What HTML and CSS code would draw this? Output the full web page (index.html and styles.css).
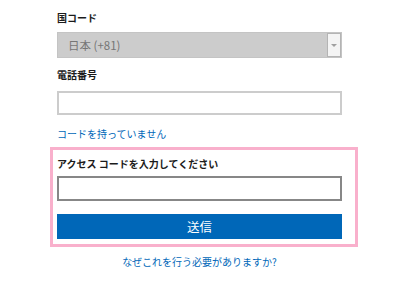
FILE: index.html
```html
<!DOCTYPE html>
<html lang="ja">
<head>
<meta charset="utf-8">
<link rel="stylesheet" href="styles.css">
</head>
<body>
<div class="form">
  <div class="label first">国コード</div>
  <div class="select">
    <span class="select-text">日本 (+81)</span>
    <span class="arrow-box"><span class="arrow"></span></span>
  </div>
  <div class="label second">電話番号</div>
  <div class="input light"></div>
  <a class="link nocode" href="#">コードを持っていません</a>
  <div class="highlight">
    <div class="label third">アクセス コードを入力してください</div>
    <div class="input dark"></div>
    <div class="button">送信</div>
  </div>
  <div class="why"><a class="link" href="#">なぜこれを行う必要がありますか?</a></div>
</div>
</body>
</html>
```
FILE: styles.css
```css
html, body {
  margin: 0;
  padding: 0;
  background: #ffffff;
}
body {
  font-family: "Noto Sans CJK JP", "Noto Sans", sans-serif;
  font-size: 10px;
  color: #1b1b1b;
}
.form {
  width: 285px;
  margin-left: 57px;
  padding-top: 10px;
}
.label {
  font-weight: bold;
  line-height: 16px;
  height: 16px;
}
.select {
  margin-top: 6px;
  height: 26px;
  box-sizing: border-box;
  background: #cccccc;
  border: 1px solid #c4c4c4;
  display: flex;
  align-items: flex-start;
}
.select-text {
  font-size: 11.5px;
  color: #767676;
  line-height: 24px;
  padding-left: 10px;
}
.arrow-box {
  margin-left: auto;
  width: 14px;
  height: 24px;
  box-sizing: border-box;
  background: #f4f4f4;
  border: 1px solid #b4b4b4;
  display: flex;
  align-items: center;
  justify-content: center;
}
.arrow {
  width: 0;
  height: 0;
  border-left: 3px solid transparent;
  border-right: 3px solid transparent;
  border-top: 3px solid #a0a0a0;
}
.second {
  margin-top: 9px;
}
.input {
  height: 24px;
  box-sizing: border-box;
  background: #ffffff;
  border: 2px solid #cccccc;
}
.input.light {
  margin-top: 8px;
}
.input.dark {
  margin-top: 4px;
  height: 25px;
  border-color: #878787;
}
.link {
  color: #0067b8;
  text-decoration: none;
  line-height: 16px;
}
.nocode {
  display: block;
  margin-top: 11px;
  height: 16px;
}
.highlight {
  margin: 5px -16px 0 -7px;
  border: 3px solid #f9b0cc;
  padding: 6px 13px 5px 4px;
}
.button {
  margin-top: 13px;
  height: 25px;
  background: #0067b8;
  color: #ffffff;
  font-size: 12.5px;
  line-height: 25px;
  text-align: center;
}
.why {
  margin-top: 7px;
  text-align: center;
  line-height: 16px;
}
```
